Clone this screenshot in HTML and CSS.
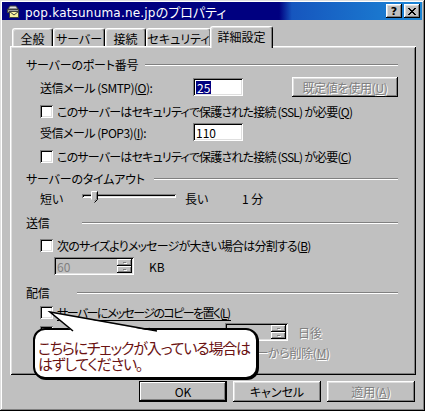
FILE: index.html
```html
<!DOCTYPE html>
<html lang="ja">
<head>
<meta charset="utf-8">
<title>pop.katsunuma.ne.jpのプロパティ</title>
<link rel="stylesheet" href="styles.css">
</head>
<body>
<div class="window">
  <div class="titlebar">
    <svg class="ticon" width="14" height="14" viewBox="0 0 14 14">
      <path d="M2 5 L4 2 L10 2 L12 5 Z" fill="#e0e0e0" stroke="#404040" stroke-width="1"/>
      <rect x="1.5" y="5.5" width="11" height="3" fill="#a0a0a0" stroke="#404040"/>
      <rect x="3.5" y="7.5" width="9" height="6" fill="#f8f0a0" stroke="#404040"/>
      <path d="M3.5 7.5 L8 11 L12.5 7.5" fill="none" stroke="#404040"/>
    </svg>
    <span class="ttext">pop.katsunuma.ne.jp<span class="tj">のプロパティ</span></span>
    <div class="tbtns">
      <span class="tbtn qbtn">?</span>
      <span class="tbtn">
        <svg width="8" height="7" viewBox="0 0 8 7"><path d="M0 0h2v1h-2zM6 0h2v1h-2zM1 1h2v1h-2zM5 1h2v1h-2zM2 2h4v1h-4zM3 3h2v1h-2zM2 4h4v1h-4zM1 5h2v1h-2zM5 5h2v1h-2zM0 6h2v1h-2zM6 6h2v1h-2z" fill="#000"/></svg>
      </span>
    </div>
  </div>

  <div class="content">
    <div class="tabs">
      <div class="tab t1">全般</div>
      <div class="tab t2">サーバー</div>
      <div class="tab t3">接続</div>
      <div class="tab t4">セキュリティ</div>
      <div class="tab sel">詳細設定</div>
    </div>

    <div class="panel">
      <div class="group g1"><span class="gtitle w1">サーバーのポート番号</span><span class="etch"></span></div>

      <div class="row r-smtp">
        <span class="lbl">送信メール (SMTP)(<u>O</u>):</span>
        <span class="field"><span class="selected">25</span></span>
        <span class="btn disabled defbtn">既定値を使用(<u>U</u>)</span>
      </div>

      <div class="row r-cb1">
        <span class="cb"></span>
        <span class="cbl">このサーバーはセキュリティで保護された接続 (SSL) が必要(<u>Q</u>)</span>
      </div>

      <div class="row r-pop">
        <span class="lbl">受信メール (POP3)(<u>I</u>):</span>
        <span class="field">110</span>
      </div>

      <div class="row r-cb2">
        <span class="cb"></span>
        <span class="cbl">このサーバーはセキュリティで保護された接続 (SSL) が必要(<u>C</u>)</span>
      </div>

      <div class="group g2"><span class="gtitle w2">サーバーのタイムアウト</span><span class="etch"></span></div>

      <div class="row r-slider">
        <span class="sl-short">短い</span>
        <span class="track">
          <svg class="thumb" width="7" height="12" viewBox="0 0 7 12">
            <path d="M0.5 0.5 H6.5 V8.5 L3.5 11.5 L0.5 8.5 Z" fill="#c0c0c0"/>
            <path d="M0.5 8.5 V0.5 H6" fill="none" stroke="#fff"/>
            <path d="M6.5 0.5 V8.5 L3.5 11.5" fill="none" stroke="#000"/>
            <path d="M5.5 1.5 V8 L3.5 10" fill="none" stroke="#808080"/>
          </svg>
        </span>
        <span class="sl-long">長い</span>
        <span class="sl-val">1 分</span>
      </div>

      <div class="group g3"><span class="gtitle w3">送信</span><span class="etch"></span></div>

      <div class="row r-cb3">
        <span class="cb"></span>
        <span class="cbl">次のサイズよりメッセージが大きい場合は分割する(<u>B</u>)</span>
      </div>

      <div class="row r-spin">
        <span class="spin sp1">
          <span class="spintext">60</span>
          <span class="spinbtns"><span class="sbtn"><i class="up"></i></span><span class="sbtn"><i class="down"></i></span></span>
        </span>
        <span class="kb">KB</span>
      </div>

      <div class="group g4"><span class="gtitle w4">配信</span><span class="etch"></span></div>

      <div class="row r-cb4">
        <span class="cb"></span>
        <span class="cbl focus">サーバーにメッセージのコピーを置く(<u>L</u>)</span>
      </div>

      <div class="row r-h1">
        <span class="cb dis"></span>
        <span class="cbl dtext hl1">サーバーから削除する(<u>R</u>)</span>
        <span class="spin sp2">
          <span class="spintext"></span>
          <span class="spinbtns"><span class="sbtn"><i class="up"></i></span><span class="sbtn"><i class="down"></i></span></span>
        </span>
        <span class="dtext days">日後</span>
      </div>

      <div class="row r-h2">
        <span class="cb dis"></span>
        <span class="cbl dtext hl2">[削除済みアイテム]を空にしたら、サーバーから削除(<u>M</u>)</span>
      </div>
    </div>

    <div class="buttons">
      <span class="btn okbtn">OK</span>
      <span class="btn">キャンセル</span>
      <span class="btn disabled">適用(<u>A</u>)</span>
    </div>
  </div>

  <svg class="tail" width="120" height="24" viewBox="0 0 120 24">
    <polygon points="3,1 26,21 110,21" fill="#fff"/>
    <polyline points="26,20 3,1 110,20" fill="none" stroke="#000" stroke-width="1.6"/>
  </svg>
  <div class="callout">
    <div class="cline">こちらにチェックが入っている場合は</div>
    <div class="cline">はずしてください。</div>
  </div>
</div>
</body>
</html>
```

FILE: styles.css
```css
* { box-sizing: border-box; }
html, body { margin: 0; padding: 0; }
body {
  width: 425px;
  height: 411px;
  overflow: hidden;
  background: #c0c0c0;
  font-family: "Noto Sans CJK JP", sans-serif;
  font-size: 12px;
  color: #000;
  font-feature-settings: "palt";
}
u { text-decoration: underline; text-underline-offset: 1px; }

.window {
  position: relative;
  width: 425px;
  height: 411px;
  padding: 2px;
  background: #c0c0c0;
  box-shadow: inset -1px -1px #000, inset 1px 1px #dfdfdf, inset -2px -2px #808080, inset 2px 2px #fff;
}

/* title bar */
.titlebar {
  height: 18px;
  margin-right: 1px;
  display: flex;
  align-items: center;
  padding-left: 4px;
  padding-right: 2px;
  color: #fff;
  background: linear-gradient(to right, #000080 0%, #000080 66%, #1656be 69%, #1c86d6 100%);
}
.ticon { flex: none; margin-top: -1px; }
.ttext {
  margin-left: 5px;
  font-family: "DejaVu Sans", "Noto Sans CJK JP", sans-serif;
  font-size: 12px;
  letter-spacing: 0.2px;
  white-space: nowrap;
}
.tj { font-family: "Noto Sans CJK JP", sans-serif; font-size: 13px; letter-spacing: 0; }
.tbtns { margin-left: auto; display: flex; gap: 2px; }
.tbtn {
  width: 16px;
  height: 14px;
  background: #c0c0c0;
  color: #000;
  display: flex;
  align-items: center;
  justify-content: center;
  box-shadow: inset -1px -1px #000, inset 1px 1px #fff, inset -2px -2px #808080, inset 2px 2px #dfdfdf;
}
.qbtn { font-family: "DejaVu Sans", sans-serif; font-weight: bold; font-size: 11px; line-height: 1; padding-top: 1px; }

/* content */
.content { padding: 6px 0 0 8px; }

.tabs {
  position: relative;
  z-index: 1;
  height: 20px;
  display: flex;
  align-items: flex-end;
  padding-left: 2px;
}
.tab {
  height: 18px;
  display: flex;
  align-items: center;
  justify-content: center;
  background: #c0c0c0;
  border-top: 1px solid #fff;
  border-left: 1px solid #fff;
  border-right: 1px solid #000;
  border-radius: 3px 3px 0 0;
  box-shadow: inset -1px 0 #808080, inset 1px 1px #dfdfdf;
  padding-top: 1px;
}
.t1 { width: 41px; }
.t2 { width: 52px; }
.t3 { width: 41px; }
.t4 { width: 65px; }
.sel {
  width: 63px;
  height: 22px;
  margin-left: -1px;
  margin-bottom: -2px;
  padding-bottom: 3px;
  box-shadow: inset -1px 0 #808080, inset 1px 1px #dfdfdf;
}

.panel {
  width: 406px;
  height: 329px;
  padding: 10px 18px 0 16px;
  background: #c0c0c0;
  box-shadow: inset 1px 1px #fff, inset -1px -1px #000, inset 2px 2px #dfdfdf, inset -2px -2px #808080;
  display: flex;
  flex-direction: column;
}

.group { height: 16px; display: flex; align-items: center; flex: none; }
.gtitle { flex: none; white-space: nowrap; letter-spacing: -0.2px; }
.w1 { width: 119px; }
.w2 { width: 128px; }
.w3 { width: 56px; }
.w4 { width: 51px; }
.etch { flex: 1; height: 2px; border-top: 1px solid #808080; border-bottom: 1px solid #fff; margin-top: 1px; }

.row { height: 20px; display: flex; align-items: center; padding-left: 14px; flex: none; white-space: nowrap; letter-spacing: -0.8px; }

.g2 { margin-top: 4px; }
.g3 { margin-top: 6px; }
.g4 { margin-top: 8px; }
.r-smtp { margin-top: 5px; }
.r-cb1 { margin-top: 4px; }
.r-pop { margin-top: 1px; }
.r-cb2 { margin-top: 4px; }
.r-slider { margin-top: 2px; letter-spacing: 0; }
.r-cb3 { margin-top: 5px; }
.r-spin { margin-top: 1px; letter-spacing: 0; }
.r-cb4 { margin-top: 2px; }

.lbl { width: 153px; flex: none; padding-left: 0; letter-spacing: -0.5px; }
.field {
  width: 50px;
  height: 18px;
  flex: none;
  background: #fff;
  display: flex;
  align-items: center;
  padding-left: 3px;
  letter-spacing: 0;
  box-shadow: inset 1px 1px #808080, inset -1px -1px #fff, inset 2px 2px #000, inset -2px -2px #dfdfdf;
}
.selected { background: #000080; color: #fff; padding: 0 1px; line-height: 13px; }

.btn {
  height: 20px;
  display: flex;
  align-items: center;
  justify-content: center;
  background: #c0c0c0;
  box-shadow: inset -1px -1px #000, inset 1px 1px #fff, inset -2px -2px #808080, inset 2px 2px #dfdfdf;
  white-space: nowrap;
}
.disabled { color: #808080; text-shadow: 1px 1px #fff; }
.defbtn { width: 106px; margin-left: 49px; letter-spacing: -0.3px; }

.cb {
  width: 13px;
  height: 13px;
  flex: none;
  background: #fff;
  box-shadow: inset 1px 1px #808080, inset -1px -1px #fff, inset 2px 2px #000, inset -2px -2px #dfdfdf;
}
.cb.dis { background: #c0c0c0; }
.cbl { margin-left: 4px; }
.focus { border-bottom: 1px solid #000; line-height: 15px; margin-top: 2px; letter-spacing: -1.6px; padding-right: 2px; }

.sl-short { width: 42px; flex: none; }
.track {
  position: relative;
  width: 94px;
  height: 4px;
  flex: none;
  margin-top: -4px;
  box-shadow: inset 1px 1px #808080, inset -1px -1px #fff, inset 2px 2px #000, inset -2px -2px #dfdfdf;
}
.thumb { position: absolute; left: 9px; top: -3px; }
.sl-long { margin-left: 9px; width: 57px; flex: none; }

.spin {
  position: relative;
  height: 18px;
  flex: none;
  display: flex;
  align-items: center;
  background: #c0c0c0;
  letter-spacing: 0;
  box-shadow: inset 1px 1px #808080, inset -1px -1px #fff, inset 2px 2px #000, inset -2px -2px #dfdfdf;
}
.sp1 { width: 80px; margin-left: 14px; }
.spintext { flex: 1; padding-left: 3px; color: #808080; }
.spinbtns { width: 15px; height: 14px; margin-right: 2px; display: flex; flex-direction: column; }
.sbtn {
  flex: 1;
  display: flex;
  align-items: center;
  justify-content: center;
  box-shadow: inset -1px -1px #000, inset 1px 1px #fff, inset -2px -2px #808080;
}
.sbtn i { display: block; width: 3px; height: 1px; background: #808080; box-shadow: 1px 1px #fff; }
.kb { margin-left: 15px; }

.dtext { color: #808080; text-shadow: 1px 1px #fff; }
.hl1 { width: 168px; flex: none; }
.sp2 { width: 63px; }
.days { margin-left: 10px; letter-spacing: 0; }
.hl2 { letter-spacing: -0.3px; }

.buttons {
  width: 406px;
  margin-top: 6px;
  display: flex;
  justify-content: flex-end;
  gap: 6px;
  padding-right: 1px;
}
.buttons .btn { width: 88px; height: 21px; }
.okbtn { box-shadow: inset -1px -1px #000, inset 1px 1px #000, inset -2px -2px #000, inset 2px 2px #fff, inset -3px -3px #808080; }

/* callout overlay */
.callout {
  position: absolute;
  left: 33px;
  top: 328px;
  width: 225px;
  height: 51px;
  background: #fff;
  border: 2px solid #000;
  border-radius: 12px;
  padding: 10px 0 0 3px;
  color: #6a1212;
  font-size: 15px;
  line-height: 16px;
  letter-spacing: -1.2px;
  white-space: nowrap;
  box-shadow: 1px 1px 0 #000;
}
.tail { position: absolute; left: 47px; top: 311px; z-index: 2; }
```
